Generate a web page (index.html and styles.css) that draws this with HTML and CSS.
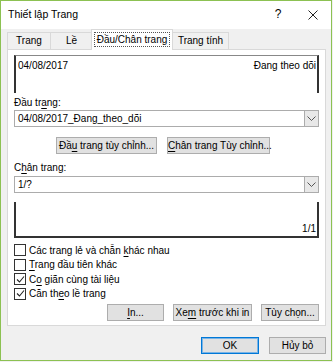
FILE: index.html
```html
<!DOCTYPE html>
<html lang="vi">
<head>
    <meta charset="UTF-8">
    <title>Thiết lập Trang</title>
    <link rel="stylesheet" href="styles.css">
</head>
<body>
    <div class="dialog">
        <!-- Title bar -->
        <div class="titlebar">
            <div class="title">Thiết lập Trang</div>
            <div class="title-help">?</div>
            <div class="title-close">
                <svg width="10" height="10" viewBox="0 0 10 10"><path d="M0.5 0.5L9.5 9.5M9.5 0.5L0.5 9.5" stroke="#222" stroke-width="1"/></svg>
            </div>
        </div>

        <!-- Tabs -->
        <div class="tabs">
            <div class="tab">Trang</div>
            <div class="tab">Lề</div>
            <div class="tab active"><span class="focus">Đầu/Chân trang</span></div>
            <div class="tab">Trang tính</div>
        </div>

        <div class="panel">
            <div class="preview header-preview">
                <span>04/08/2017</span>
                <span>Đang theo dõi</span>
            </div>

            <div class="label">Đầu tr<u>a</u>ng:</div>
            <div class="select">
                <span class="value">04/08/2017_Đang_theo_dõi</span>
                <div class="arrow"><svg width="9" height="5" viewBox="0 0 9 5"><path d="M0.5 0.5L4.5 4.5L8.5 0.5" fill="none" stroke="#555"/></svg></div>
            </div>

            <div class="custom-buttons">
                <div class="btn header-btn">Đầ<u>u</u> trang tùy chỉnh...</div>
                <div class="btn footer-btn"><u>C</u>hân trang Tùy chỉnh...</div>
            </div>

            <div class="label second">C<u>h</u>ân trang:</div>
            <div class="select">
                <span class="value">1/?</span>
                <div class="arrow"><svg width="9" height="5" viewBox="0 0 9 5"><path d="M0.5 0.5L4.5 4.5L8.5 0.5" fill="none" stroke="#555"/></svg></div>
            </div>

            <div class="preview footer-preview">
                <span>1/1</span>
            </div>

            <div class="checks">
                <div class="check"><span class="box"></span><span>Các trang lẻ và chẵn <u>k</u>hác nhau</span></div>
                <div class="check"><span class="box"></span><span><u>T</u>rang đầu tiên khác</span></div>
                <div class="check"><span class="box"><svg width="9" height="9" viewBox="0 0 9 9"><path d="M1 4.5L3.5 7L8 1.5" fill="none" stroke="#222" stroke-width="1.1"/></svg></span><span>C<u>o</u> giãn cùng tài liệu</span></div>
                <div class="check"><span class="box"><svg width="9" height="9" viewBox="0 0 9 9"><path d="M1 4.5L3.5 7L8 1.5" fill="none" stroke="#222" stroke-width="1.1"/></svg></span><span>Căn th<u>e</u>o lề trang</span></div>
            </div>

            <div class="panel-buttons">
                <div class="btn print"><u>I</u>n...</div>
                <div class="btn preview-btn">Xe<u>m</u> trước khi in</div>
                <div class="btn options">Tùy chọn...</div>
            </div>
        </div>

        <div class="footer">
            <div class="btn ok">OK</div>
            <div class="btn cancel">Hủy bỏ</div>
        </div>
    </div>
</body>
</html>
```

FILE: styles.css
```css
* {
    box-sizing: border-box;
}
body {
    margin: 0;
    padding: 0;
    font-family: "Liberation Sans", Arial, sans-serif;
    font-size: 10px;
    color: #000;
    background-color: #f0f0f0;
    white-space: nowrap;
}
u {
    text-decoration-thickness: 1px;
    text-underline-offset: 2px;
}
.dialog {
    width: 332px;
    height: 361px;
    border: 1px solid #8cc152;
    background-color: #f0f0f0;
    display: flex;
    flex-direction: column;
}

/* Title bar */
.titlebar {
    height: 28px;
    flex-shrink: 0;
    display: flex;
    align-items: center;
    background-color: #fff;
}
.title {
    flex: 1;
    padding-left: 7px;
    font-size: 10.5px;
    padding-bottom: 2px;
}
.title-help {
    width: 20px;
    text-align: center;
    font-size: 12px;
    padding-bottom: 2px;
    margin-right: 15px;
}
.title-close {
    width: 20px;
    display: flex;
    justify-content: center;
    margin-right: 8px;
}

/* Tabs */
.tabs {
    display: flex;
    align-items: flex-end;
    height: 20px;
    flex-shrink: 0;
    padding-left: 6px;
    position: relative;
    z-index: 1;
}
.tab {
    height: 17px;
    line-height: 16px;
    border: 1px solid #d9d9d9;
    border-bottom: none;
    background-color: #f0f0f0;
    text-align: center;
    margin-right: -1px;
}
.tab:nth-child(1) { width: 44px; }
.tab:nth-child(2) { width: 43px; }
.tab:nth-child(4) { width: 57px; }
.tab.active {
    width: 82px;
    height: 21px;
    line-height: 17px;
    padding-top: 1px;
    background-color: #fff;
    margin-bottom: -1px;
    margin-left: -1px;
    position: relative;
    z-index: 2;
}
.tab .focus {
    display: inline-block;
    line-height: 13px;
    border: 1px dotted #555;
    padding: 0 2px;
}

/* Panel */
.panel {
    margin-left: 6px;
    width: 319px;
    height: 277px;
    flex-shrink: 0;
    background-color: #fff;
    border: 1px solid #d9d9d9;
    padding: 5px 6px 0 6px;
    display: flex;
    flex-direction: column;
}
.preview {
    border-left: 2px solid #333;
    border-right: 2px solid #333;
    display: flex;
}
.header-preview {
    height: 38px;
    border-top: 1px solid #888;
    justify-content: space-between;
    align-items: flex-start;
    padding: 4px 1px 0 2px;
}
.label {
    margin-top: 3px;
    height: 14px;
    line-height: 14px;
}
.label.second {
    margin-top: 6px;
    height: 16px;
    line-height: 16px;
}
.select {
    height: 17px;
    border: 1px solid #acacac;
    display: flex;
    align-items: center;
    padding-left: 3px;
}
.select .value {
    flex: 1;
}
.arrow {
    width: 14px;
    height: 15px;
    border-left: 1px solid #acacac;
    background-color: #e8e8e8;
    display: flex;
    align-items: center;
    justify-content: center;
}
.btn {
    height: 17px;
    line-height: 15px;
    border: 1px solid #adadad;
    background-color: #e1e1e1;
    text-align: center;
}
.custom-buttons {
    display: flex;
    gap: 10px;
    margin-top: 10px;
    padding-left: 42px;
}
.btn.header-btn { width: 101px; }
.btn.footer-btn { width: 103px; }
.footer-preview {
    margin-top: 9px;
    height: 36px;
    border-bottom: 2px solid #333;
    justify-content: flex-end;
    align-items: flex-end;
    line-height: 14px;
    padding-right: 1px;
}
.checks {
    margin-top: 5px;
    display: flex;
    flex-direction: column;
}
.check {
    display: flex;
    align-items: center;
    height: 14.5px;
    gap: 3px;
}
.box {
    width: 12px;
    height: 12px;
    border: 1px solid #333;
    background-color: #fff;
    display: flex;
    align-items: center;
    justify-content: center;
}
.panel-buttons {
    display: flex;
    justify-content: flex-end;
    gap: 9px;
    margin-top: 3px;
}
.btn.print { width: 57px; }
.btn.preview-btn { width: 79px; }
.btn.options { width: 58px; }

/* Dialog buttons */
.footer {
    display: flex;
    justify-content: flex-end;
    gap: 10px;
    padding: 11px 5px 0 0;
}
.btn.ok {
    width: 58px;
    height: 17px;
    border: 1px solid #0078d7;
    box-shadow: inset 0 0 0 1px #7ab4e6;
}
.btn.cancel {
    width: 57px;
    height: 17px;
}
```
